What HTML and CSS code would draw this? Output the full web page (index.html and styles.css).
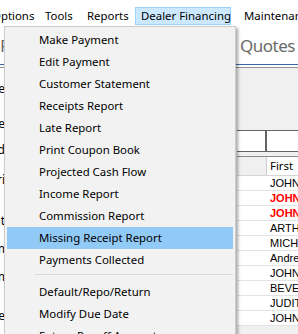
FILE: index.html
```html
<!DOCTYPE html>
<html>
<head>
<meta charset="utf-8">
<link rel="stylesheet" href="styles.css">
</head>
<body>
<div class="menubar">
  <div class="mi mi-options">Options</div>
  <div class="mi mi-tools">Tools</div>
  <div class="mi mi-reports">Reports</div>
  <div class="mi mi-dealer open">Dealer Financing</div>
  <div class="mi mi-maint">Maintenance</div>
</div>

<div class="title-band">
  <div class="title-left">Payoff</div>
  <div class="title-right">Quotes</div>
</div>
<div class="rule"></div>

<div class="main">
  <div class="labels">
    <div class="lbl l1"><span>Name</span></div>
    <div class="lbl l2"><span>Phone</span></div>
    <div class="lbl l3"><span>Paid</span></div>
    <div class="lbl l4"><span>Pri</span></div>
    <div class="lbl l5"><span>Amount</span></div>
    <div class="lbl l6"><span>Term</span></div>
    <div class="lbl l7"><span>Form</span></div>
    <div class="lbl l8"><span>Rate</span></div>
  </div>
  <div class="panel">
    <div class="inputs">
      <div class="box box-a"></div>
      <div class="box box-b"></div>
    </div>
    <div class="grid">
      <div class="row head"><div class="c1"></div><div class="c2">First</div></div>
      <div class="row"><div class="c1"></div><div class="c2">JOHN</div></div>
      <div class="row flag"><div class="c1"></div><div class="c2">JOHN</div></div>
      <div class="row flag"><div class="c1"></div><div class="c2">JOHN</div></div>
      <div class="row"><div class="c1"></div><div class="c2">ARTHUR</div></div>
      <div class="row"><div class="c1"></div><div class="c2">MICHAEL</div></div>
      <div class="row"><div class="c1"></div><div class="c2">Andrew</div></div>
      <div class="row"><div class="c1"></div><div class="c2">JOHN</div></div>
      <div class="row"><div class="c1"></div><div class="c2">BEVERLY</div></div>
      <div class="row"><div class="c1"></div><div class="c2">JUDITH</div></div>
      <div class="row"><div class="c1"></div><div class="c2">JOHN</div></div>
    </div>
  </div>
</div>

<div class="dropdown">
  <div class="item">Make Payment</div>
  <div class="item">Edit Payment</div>
  <div class="item">Customer Statement</div>
  <div class="item">Receipts Report</div>
  <div class="item">Late Report</div>
  <div class="item">Print Coupon Book</div>
  <div class="item">Projected Cash Flow</div>
  <div class="item">Income Report</div>
  <div class="item">Commission Report</div>
  <div class="item active">Missing Receipt Report</div>
  <div class="item">Payments Collected</div>
  <div class="sep"></div>
  <div class="item">Default/Repo/Return</div>
  <div class="item">Modify Due Date</div>
  <div class="item">Future Payoff Amount</div>
</div>
</body>
</html>
```

FILE: styles.css
```css
html, body {
  margin: 0;
  padding: 0;
}
body {
  width: 298px;
  height: 334px;
  overflow: hidden;
  position: relative;
  background: #ffffff;
  font-family: "Noto Sans", "Open Sans", sans-serif;
  font-size: 11.4px;
  color: #000;
}

/* menu bar */
.menubar {
  height: 25px;
  box-sizing: border-box;
  padding-top: 7px;
  display: flex;
  background: #fff;
  white-space: nowrap;
}
.mi {
  height: 18px;
  box-sizing: border-box;
  border: 1px solid transparent;
  padding: 0 6px;
  line-height: 16px;
  flex: none;
}
.mi-options { margin-left: -15px; width: 53px; }
.mi-tools { width: 42px; }
.mi-reports { width: 55px; }
.mi-dealer { width: 96px; padding-left: 5px; }
.mi-maint { margin-left: 6px; }
.mi.open {
  background: #cce8ff;
  border-color: #99d1ff;
}

/* title band */
.title-band {
  height: 39px;
  display: grid;
  grid-template-columns: 237px 1fr;
  border-bottom: 1px solid #3d66a6;
  font-size: 17px;
  line-height: 24px;
  color: #6a6a6a;
  letter-spacing: -0.5px;
}
.title-left, .title-right {
  padding-top: 9px;
  white-space: nowrap;
}
.title-right { padding-left: 3px; }
.rule {
  height: 2px;
  border-bottom: 1px solid #939393;
}

/* main */
.main {
  display: grid;
  grid-template-columns: 237px 1fr;
  height: 266px;
}
.labels {
  width: 5px;
  font-size: 12px;
  line-height: 16px;
}
.lbl {
  display: flex;
  justify-content: flex-end;
  white-space: nowrap;
}
.lbl span { flex: none; }
.l1 { margin-top: 13px; }
.l2 { margin-top: 19px; }
.l3 { margin-top: 10px; }
.l4 { margin-top: 14px; }
.l5 { margin-top: 25px; }
.l6 { margin-top: 12px; }
.l7 { margin-top: 12px; }
.l8 { margin-top: 23px; }

.panel {
  background: #f0f0f0;
  padding-top: 62px;
}
.inputs {
  display: flex;
  height: 22px;
}
.box {
  background: #fff;
  border: 1px solid #646464;
  box-sizing: border-box;
  height: 22px;
}
.box-a { width: 29px; border-left: none; }
.box-b { flex: 1; }

.grid {
  margin-top: 4px;
  border-top: 1px solid #8c8c8c;
  background: #fff;
  font-family: "Liberation Sans", Arial, sans-serif;
  font-size: 11px;
}
.row {
  display: flex;
  height: 15px;
  box-sizing: border-box;
  border-bottom: 1px solid #e3e3e3;
  line-height: 14px;
  white-space: nowrap;
}
.row.head {
  height: 19px;
  line-height: 18px;
  border-bottom: 1px solid #d5d5d5;
  font-family: "Noto Sans", sans-serif;
  font-size: 11.4px;
}
.row.head .c1 {
  background: #f0f0f0;
  border-right: 1px solid #cfcfcf;
}
.c1 {
  width: 30px;
  flex: none;
}
.row.head .c1 { width: 29px; }
.c2 {
  padding-left: 3px;
}
.row.flag .c2 {
  color: #ff0000;
  font-weight: bold;
}

/* dropdown menu */
.dropdown {
  position: absolute;
  left: 4px;
  top: 26px;
  width: 232px;
  box-sizing: border-box;
  background: #f2f2f2;
  border: 1px solid #cccccc;
  padding: 2px;
  box-shadow: 2px 2px 3px rgba(0, 0, 0, 0.35);
}
.item {
  height: 22px;
  line-height: 22px;
  padding-left: 32px;
  white-space: nowrap;
  color: #000;
}
.item.active {
  background: #91c9f7;
}
.sep {
  height: 7px;
}
.sep::after {
  content: "";
  display: block;
  margin-left: 28px;
  margin-top: 3px;
  height: 1px;
  background: #d7d7d7;
}
```
